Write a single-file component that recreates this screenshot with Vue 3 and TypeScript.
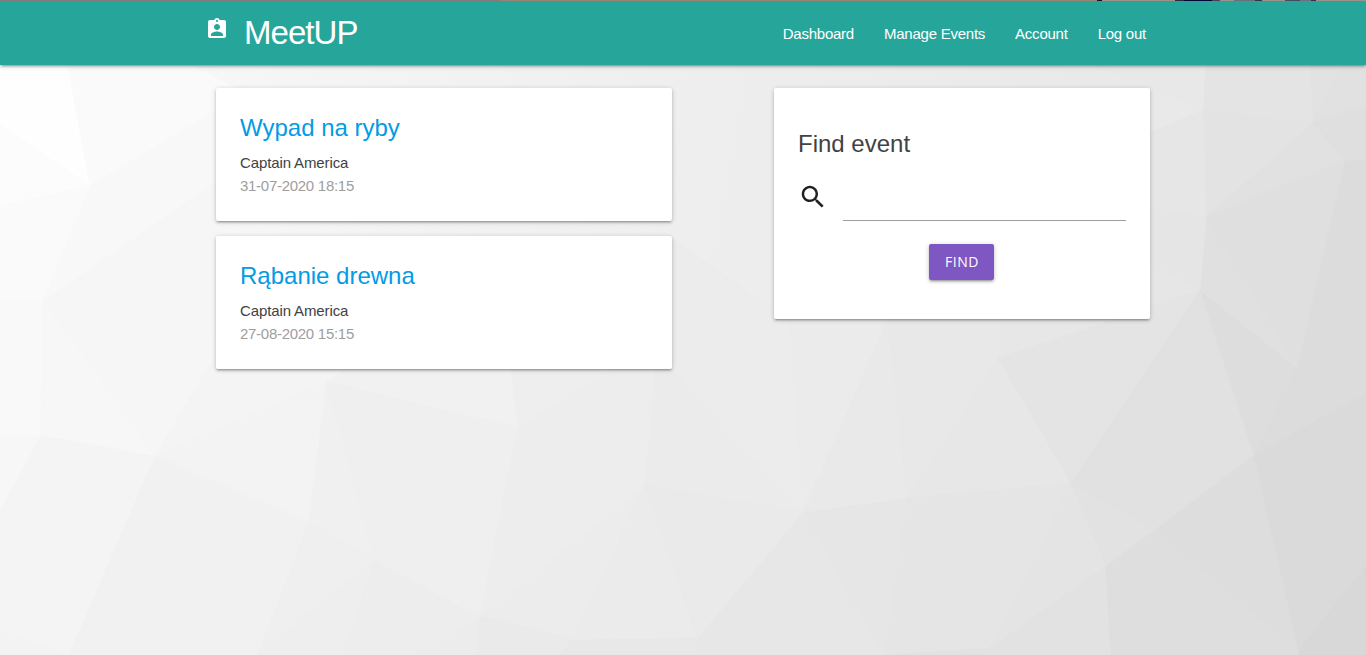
<script setup lang="ts">
interface EventItem {
  title: string
  author: string
  date: string
}

interface Facet {
  points: string
  fill: string
}

const links: string[] = ['Dashboard', 'Manage Events', 'Account', 'Log out']

const events: EventItem[] = [
  { title: 'Wypad na ryby', author: 'Captain America', date: '31-07-2020 18:15' },
  { title: 'Rąbanie drewna', author: 'Captain America', date: '27-08-2020 15:15' },
]

// Low-poly backdrop: each facet is a polygon with a two-digit grey level.
const mesh: [string, string][] = [
  ['0,0 56,0 90,186 0,125', 'fe'],
  ['0,125 90,186 0,206', 'fc'],
  ['56,0 190,65 240,90 216,150 90,186', 'fa'],
  ['90,186 216,110 216,185 42,302', 'f8'],
  ['0,206 90,186 42,302 0,305', 'fa'],
  ['42,302 216,182 216,340', 'f6'],
  ['42,302 216,338 210,370 155,456 83,355', 'f6'],
  ['0,303 42,302 41,436 0,436', 'f9'],
  ['42,302 83,355 155,456 41,436', 'f7'],
  ['0,436 41,436 0,512', 'f7'],
  ['41,436 155,456 69,655 0,630 0,512', 'f4'],
  ['0,630 69,655 0,655', 'f3'],
  ['210,365 350,365 327,382 155,456', 'f4'],
  ['155,456 327,382 309,522', 'f3'],
  ['155,456 309,522 258,655 69,655', 'f1'],
  ['327,382 375,560 309,522', 'f0'],
  ['309,522 375,560 258,655', 'ef'],
  ['375,560 344,655 258,655', 'ee'],
  ['375,560 480,617 415,655 344,655', 'ed'],
  ['327,382 350,365 510,365 518,428', 'f1'],
  ['327,382 518,428 375,560', 'ef'],
  ['518,428 480,617 375,560', 'ef'],
  ['510,365 620,365 518,428', 'ee'],
  ['518,428 620,365 656,365 645,486 480,617', 'ed'],
  ['480,617 645,486 572,640', 'ec'],
  ['645,486 698,638 572,640', 'eb'],
  ['415,655 480,617 477,655', 'ec'],
  ['480,617 572,640 560,655 477,655', 'ea'],
  ['572,640 698,638 695,655 560,655', 'e8'],
  ['656,365 668,365 804,512 645,486', 'eb'],
  ['645,486 804,512 698,638', 'ea'],
  ['698,638 804,512 884,655 695,655', 'e7'],
  ['804,512 907,498 884,655', 'e6'],
  ['668,365 668,235 790,320 804,512', 'ec'],
  ['790,320 887,320 804,512', 'eb'],
  ['887,320 907,498 804,512', 'e9'],
  ['887,315 1003,315 998,358 907,498', 'e8'],
  ['998,358 1071,483 907,498', 'e7'],
  ['1003,315 1150,315 998,358', 'e7'],
  ['998,358 1200,290 1071,483', 'e4'],
  ['907,498 1071,483 990,648 884,655', 'e5'],
  ['1071,483 1106,566 990,648', 'e4'],
  ['990,648 1106,566 1111,655 884,655', 'e2'],
  ['1071,483 1155,530 1106,566', 'e2'],
  ['1071,483 1200,290 1254,455', 'e1'],
  ['1071,483 1254,455 1155,530', 'e1'],
  ['1155,530 1299,651 1299,655 1111,655 1106,566', 'de'],
  ['1155,530 1254,455 1299,651', 'dd'],
  ['1254,455 1366,393 1366,565 1299,651', 'da'],
  ['1299,651 1366,565 1366,655 1299,655', 'd8'],
  ['1200,290 1297,368 1254,455', 'dd'],
  ['1345,160 1366,160 1366,393 1254,455 1297,368', 'dc'],
  ['1206,217 1345,160 1297,368', 'df'],
  ['1206,217 1297,368 1200,290', 'e0'],
  ['1206,217 1313,123 1345,160', 'e1'],
  ['1203,110 1313,123 1206,217', 'e3'],
  ['1205,0 1308,0 1313,123 1203,110', 'e4'],
  ['1308,0 1366,20 1313,123', 'e2'],
  ['1366,20 1366,105 1313,123', 'e1'],
  ['1313,123 1366,105 1366,160 1345,160', 'df'],
  ['1090,65 1205,65 1203,110', 'e8'],
  ['1090,65 1203,110 1145,135', 'e9'],
  ['1145,135 1203,110 1206,217 1145,206', 'e6'],
  ['1145,206 1206,217 1200,290 1145,260', 'e5'],
  ['1145,260 1200,290 1145,308', 'e6'],
]

const facets: Facet[] = mesh.map(([points, g]) => ({ points, fill: `#${g}${g}${g}` }))
</script>

<template>
  <div class="page">
    <svg class="backdrop" viewBox="0 0 1366 655" preserveAspectRatio="none" aria-hidden="true">
      <polygon
        v-for="(f, i) in facets"
        :key="i"
        :points="f.points"
        :fill="f.fill"
        :stroke="f.fill"
        stroke-width="0.6"
      />
    </svg>

    <div class="strip"></div>
    <nav class="nav">
      <div class="container nav-row">
        <a class="brand">
          <svg class="brand-icon" viewBox="0 0 24 24" aria-hidden="true">
            <path
              d="M19 3h-4.180C14.400 1.840 13.300 1 12 1c-1.300 0-2.400.84-2.820 2H5c-1.100 0-2 .9-2 2v14c0 1.100.9 2 2 2h14c1.100 0 2-.9 2-2V5c0-1.100-.9-2-2-2zm-7 0c.55 0 1 .45 1 1s-.45 1-1 1-1-.45-1-1 .45-1 1-1zm0 4c1.660 0 3 1.340 3 3s-1.340 3-3 3-3-1.340-3-3 1.340-3 3-3zm6 12H6v-1.400c0-2 4-3.100 6-3.100s6 1.100 6 3.100V19z"
            />
          </svg>
          <span class="brand-name">MeetUP</span>
        </a>
        <ul class="links">
          <li v-for="link in links" :key="link">
            <a>{{ link }}</a>
          </li>
        </ul>
      </div>
    </nav>

    <main class="container content">
      <section class="events">
        <article v-for="event in events" :key="event.title" class="card event">
          <h2 class="title">{{ event.title }}</h2>
          <p class="author">{{ event.author }}</p>
          <p class="date">{{ event.date }}</p>
        </article>
      </section>

      <form class="card finder" @submit.prevent>
        <h3 class="finder-title">Find event</h3>
        <div class="field">
          <svg class="search" viewBox="0 0 24 24" aria-hidden="true">
            <path
              d="M15.500 14h-.79l-.28-.27C15.410 12.590 16 11.110 16 9.500 16 5.910 13.090 3 9.500 3S3 5.910 3 9.500 5.910 16 9.500 16c1.610 0 3.090-.59 4.230-1.570l.27.28v.79l5 4.990L20.490 19l-4.990-5zm-6 0C7.010 14 5 11.990 5 9.500S7.010 5 9.500 5 14 7.010 14 9.500 11.990 14 9.500 14z"
            />
          </svg>
          <input class="input" type="text" aria-label="Event name" />
        </div>
        <button class="button" type="submit">FIND</button>
      </form>
    </main>
  </div>
</template>

<style>
body {
  margin: 0;
  overflow: hidden;
}
</style>

<style scoped>
.page {
  position: relative;
  isolation: isolate;
  height: 655px;
  overflow: hidden;
  font-family: 'Liberation Sans', Arial, sans-serif;
  font-size: 15px;
  line-height: 22.5px;
  color: rgba(0, 0, 0, 0.87);
  background: linear-gradient(100deg, #fbfbfb 0%, #f2f2f2 32%, #ededed 55%, #e9e9e9 75%, #dadada 100%);
}

.backdrop {
  position: absolute;
  inset: 0;
  z-index: -1;
  width: 100%;
  height: 100%;
}

.strip {
  height: 1px;
  background: linear-gradient(
    90deg,
    #8b8580 0 500px,
    #a08c7c 500px 1097px,
    #15152f 1097px 1102px,
    #a89a8c 1102px 1175px,
    #2c2c48 1175px 1184px,
    #07073a 1184px 1212px,
    #494a5e 1212px 1220px,
    #a39b90 1220px 1234px,
    #6d7684 1234px 1255px,
    #35384e 1255px 1262px,
    #a39b90 1262px 1285px,
    #4c5266 1285px 1300px,
    #707987 1300px 1311px,
    #33364e 1311px 1316px,
    #a59c90 1316px
  );
}

.container {
  width: 956px;
  margin: 0 auto;
}

.nav {
  height: 64px;
  color: #fff;
  background: #26a69a;
  box-shadow:
    0 2px 2px 0 rgba(0, 0, 0, 0.14),
    0 3px 1px -2px rgba(0, 0, 0, 0.12),
    0 1px 5px 0 rgba(0, 0, 0, 0.2);
}

.nav-row {
  display: flex;
  justify-content: space-between;
}

.brand {
  display: flex;
  gap: 15px;
}

.brand-icon {
  width: 24px;
  height: 24px;
  margin: 16px 0.4px 0 -0.4px;
  fill: currentColor;
}

.brand-name {
  font-size: 33px;
  line-height: 64px;
  letter-spacing: -0.95px;
}

.links {
  display: flex;
  margin: 0;
  padding: 0;
  list-style: none;
}

.links a {
  display: block;
  padding: 0 15px;
  line-height: 65px;
  letter-spacing: -0.24px;
}

.content {
  display: flex;
  justify-content: space-between;
  align-items: flex-start;
  box-sizing: border-box;
  padding: 23px 11px 0;
}

.events {
  display: grid;
  gap: 15px;
  width: 456px;
}

.card {
  box-sizing: border-box;
  padding: 24px;
  background: #fff;
  border-radius: 2px;
  box-shadow:
    0 2px 2px 0 rgba(0, 0, 0, 0.14),
    0 3px 1px -2px rgba(0, 0, 0, 0.12),
    0 1px 5px 0 rgba(0, 0, 0, 0.2);
}

.event {
  height: 133px;
}

.title {
  margin: 0 0 8px;
  font-size: 24px;
  font-weight: 400;
  line-height: 32px;
  color: #039be5;
}

.author,
.date {
  margin: 0;
}

.author {
  color: #424242;
  letter-spacing: -0.12px;
}

.date {
  color: #9e9e9e;
  letter-spacing: -0.28px;
}

.finder {
  display: flex;
  flex-direction: column;
  width: 376px;
  height: 231px;
}

.finder-title {
  margin: 16px 0 0;
  font-size: 24px;
  font-weight: 400;
  line-height: 32px;
  color: #424242;
}

.field {
  display: flex;
  gap: 15px;
  margin-top: 16px;
}

.search {
  flex: none;
  width: 30px;
  height: 30px;
  margin-top: 6px;
  fill: #212121;
}

.input {
  flex: 1;
  min-width: 0;
  box-sizing: border-box;
  height: 45px;
  padding: 0;
  border: 0;
  border-bottom: 1px solid #9e9e9e;
  outline: none;
  background: transparent;
  font: inherit;
}

.button {
  align-self: center;
  width: 65px;
  height: 36px;
  margin: 23px 1px 0 0;
  padding: 0 0 0 1px;
  border: 0;
  border-radius: 2px;
  color: #fff;
  background: #7e57c2;
  font-family: 'Open Sans', 'Noto Sans', sans-serif;
  font-size: 14px;
  line-height: 36px;
  letter-spacing: 0.5px;
  box-shadow:
    0 2px 2px 0 rgba(0, 0, 0, 0.14),
    0 3px 1px -2px rgba(0, 0, 0, 0.12),
    0 1px 5px 0 rgba(0, 0, 0, 0.2);
}
</style>
